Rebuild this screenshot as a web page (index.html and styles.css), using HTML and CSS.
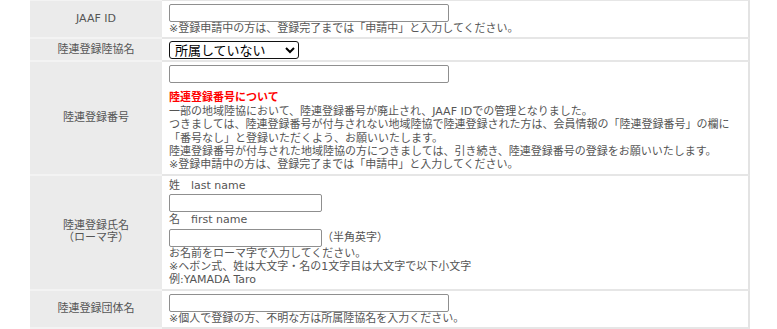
FILE: index.html
```html
<!DOCTYPE html>
<html lang="ja">
<head>
  <meta charset="UTF-8" />
  <meta name="viewport" content="width=device-width, initial-scale=1.0" />
  <title>会員情報</title>
  <link rel="stylesheet" href="styles.css">
</head>
<body>
  <table class="form-table">
    <colgroup><col class="col-label"><col></colgroup>
    <tr class="first">
      <th>JAAF ID</th>
      <td>
        <input type="text" class="txt wide">
        <div class="note">※登録申請中の方は、登録完了までは「申請中」と入力してください。</div>
      </td>
    </tr>
    <tr>
      <th>陸連登録陸協名</th>
      <td class="tight">
        <select class="sel">
          <option>所属していない</option>
        </select>
      </td>
    </tr>
    <tr>
      <th>陸連登録番号</th>
      <td>
        <input type="text" class="txt wide">
        <div class="caution">陸連登録番号について</div>
        <div class="note">一部の地域陸協において、陸連登録番号が廃止され、JAAF IDでの管理となりました。</div>
        <div class="note">つきましては、陸連登録番号が付与されない地域陸協で陸連登録された方は、会員情報の「陸連登録番号」の欄に</div>
        <div class="note">「番号なし」と登録いただくよう、お願いいたします。</div>
        <div class="note">陸連登録番号が付与された地域陸協の方につきましては、引き続き、陸連登録番号の登録をお願いいたします。</div>
        <div class="note">※登録申請中の方は、登録完了までは「申請中」と入力してください。</div>
      </td>
    </tr>
    <tr>
      <th>陸連登録氏名<br>（ローマ字）</th>
      <td>
        <div class="note">姓　last name</div>
        <input type="text" class="txt short">
        <div class="note">名　first name</div>
        <div class="inline-row"><input type="text" class="txt short">（半角英字）</div>
        <div class="note">お名前をローマ字で入力してください。</div>
        <div class="note">※ヘボン式、姓は大文字・名の1文字目は大文字で以下小文字</div>
        <div class="note">例:YAMADA Taro</div>
      </td>
    </tr>
    <tr>
      <th>陸連登録団体名</th>
      <td>
        <input type="text" class="txt wide">
        <div class="note">※個人で登録の方、不明な方は所属陸協名を入力ください。</div>
      </td>
    </tr>
    <tr>
      <th>&nbsp;</th>
      <td>&nbsp;</td>
    </tr>
  </table>
</body>
</html>
```

FILE: styles.css
```css
* { box-sizing: border-box; }
html, body { margin: 0; padding: 0; background: #fff; }
body {
  font-family: "DejaVu Sans", "Noto Sans CJK JP", sans-serif;
  font-size: 11px; color: #555;
}

.form-table {
  margin-left: 30px; width: 720px;
  border-collapse: separate; border-spacing: 0;
  table-layout: fixed;
}
.col-label { width: 132px; }

.form-table th {
  background: #ebebeb; font-weight: normal; color: #555;
  text-align: center; vertical-align: middle;
  line-height: 12px;
  border-bottom: 2px solid #f3f3f3;
}
.form-table td {
  padding: 3px 7px 2px;
  vertical-align: top;
  border-bottom: 2px solid #e6e6e6; border-right: 2px solid #e3e3e3;
}
.form-table tr.first th { border-top: 1px solid #f3f3f3; }
.form-table tr.first td { border-top: 1px solid #e6e6e6; }
.form-table td.tight { padding: 2px 7px 1px; }

.note { line-height: 13.4px; white-space: nowrap; }
.caution { color: #f00; font-weight: bold; line-height: 13.4px; margin-top: 8px; }

.txt {
  display: block; height: 18px; margin: 0;
  border: 1px solid #8f8f8f; border-radius: 2px;
  background: #fff; font: inherit; padding: 0 2px;
}
.txt.wide { width: 280px; }
.txt.short { width: 153px; margin: 2px 0 1px; }

.inline-row { display: flex; align-items: center; line-height: 13.4px; margin-top: 2px; }
.inline-row .txt { margin: 0; }

.sel {
  display: block; width: 130px; height: 18px; margin: 0;
  font-family: "DejaVu Sans", "Noto Sans CJK JP", sans-serif;
  font-size: 13px; color: #000;
  border: 1px solid #111; border-radius: 3px; background: #fff;
  padding: 0 0 0 1px;
}
```
